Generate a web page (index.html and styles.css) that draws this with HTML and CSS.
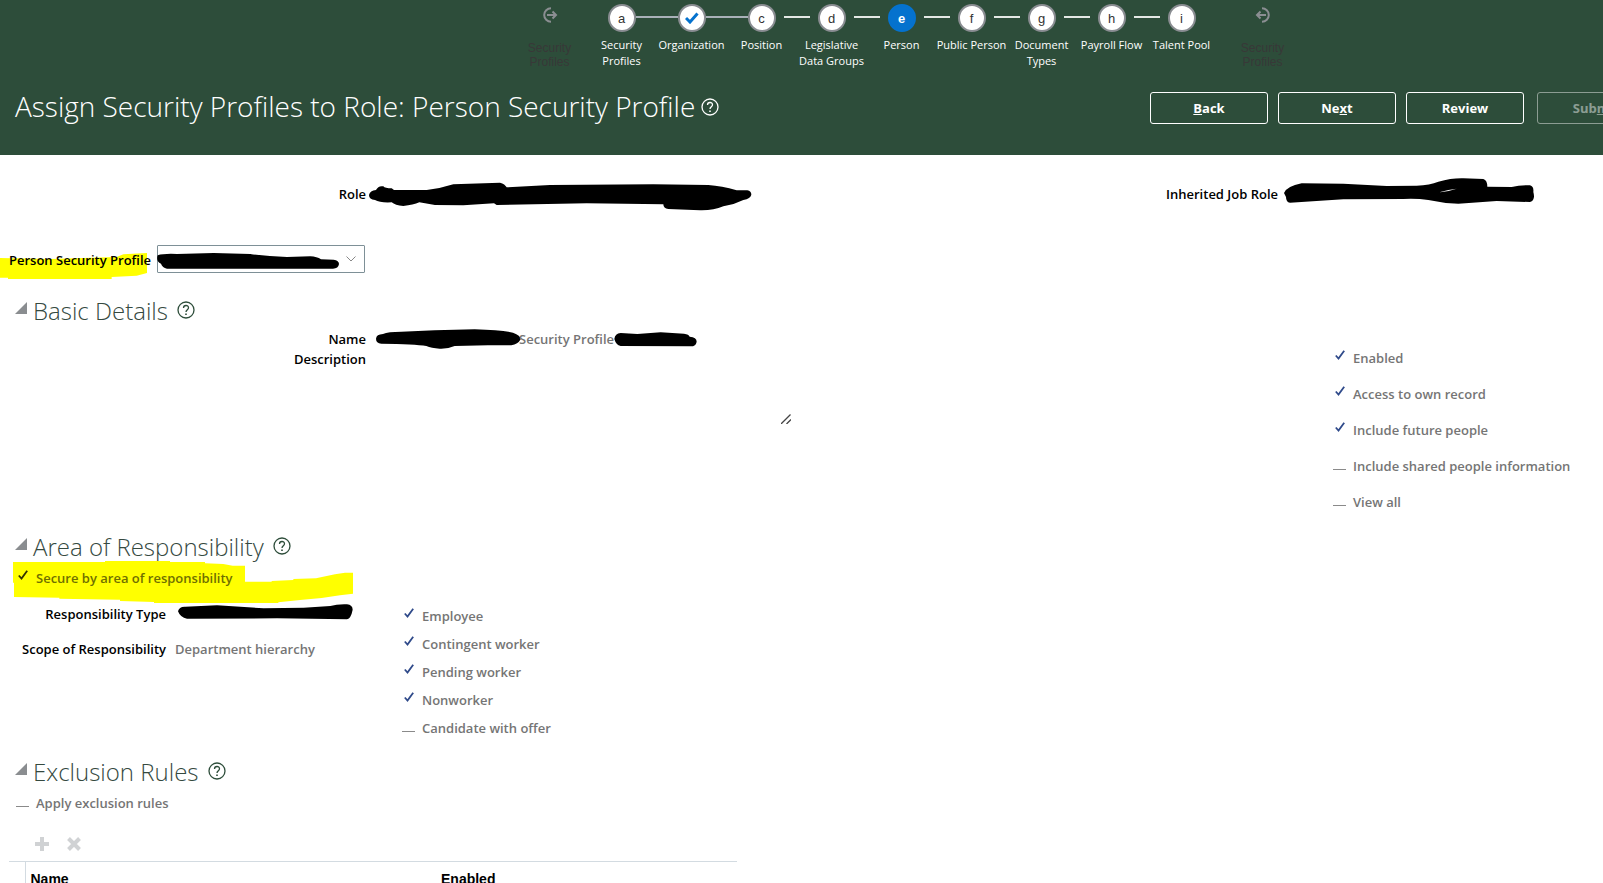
FILE: index.html
```html
<!doctype html>
<html lang="en">
  <head>
    <meta charset="utf-8">
    <title>Assign Security Profiles to Role</title>
    <link rel="stylesheet" href="styles.css">
  </head>
  <body>
    <header class="header">
      <nav class="train">
        <a class="train-end" href="#">
          <svg width="16" height="16" viewBox="0 0 16 16" fill="none" stroke="#8b8e92" stroke-width="2"><path d="M9 1.2A6.8 6.8 0 1 0 9 14.8"/><path d="M5 8h9M10.5 4.5 14 8l-3.500 3.500"/></svg>
          <span>Security<br>Profiles</span>
        </a>
        <ol class="steps">
          <li class="step linked"><a href="#"><b>a</b><span>Security<br>Profiles</span></a></li>
          <li class="step linked"><a href="#"><b><svg width="14" height="12" viewBox="0 0 14 12" fill="none" stroke="#0572ce" stroke-width="3"><path d="M1 6l4 4 7.500-8.500"/></svg></b><span>Organization</span></a></li>
          <li class="step"><a href="#"><b>c</b><span>Position</span></a></li>
          <li class="step"><a href="#"><b>d</b><span>Legislative<br>Data Groups</span></a></li>
          <li class="step current"><a href="#"><b>e</b><span>Person</span></a></li>
          <li class="step"><a href="#"><b>f</b><span>Public Person</span></a></li>
          <li class="step"><a href="#"><b>g</b><span>Document<br>Types</span></a></li>
          <li class="step"><a href="#"><b>h</b><span>Payroll Flow</span></a></li>
          <li class="step"><a href="#"><b>i</b><span>Talent Pool</span></a></li>
        </ol>
        <a class="train-end" href="#">
          <svg width="16" height="16" viewBox="0 0 16 16" fill="none" stroke="#8b8e92" stroke-width="2"><path d="M7 1.200A6.800 6.800 0 1 1 7 14.800"/><path d="M11 8H2M5.500 4.500 2 8l3.500 3.500"/></svg>
          <span>Security<br>Profiles</span>
        </a>
      </nav>

      <div class="title-row">
        <h1>Assign Security Profiles to Role: Person Security Profile</h1>
        <a class="help" href="#" aria-label="Help"><svg width="18" height="18" viewBox="0 0 18 18" fill="none" stroke="currentColor" stroke-width="1.300"><circle cx="9" cy="9" r="8"/><path d="M6.500 7c0-3.300 5-3.300 5-.3C11.500 8.700 9 8.600 9 11"/><path d="M9 12.500v1.500" stroke-width="1.600"/></svg></a>
        <div class="actions">
          <button type="button"><u>B</u>ack</button>
          <button type="button">Ne<u>x</u>t</button>
          <button type="button">Review</button>
          <button type="button" class="submit" disabled>Sub<u>m</u>it</button>
        </div>
      </div>
    </header>

    <main>
      <dl class="role-row">
        <dt>Role</dt>
        <dd>
          <svg width="383" height="29" viewBox="147 66 1149 87"><path d="M147 105Q150 92 168 90Q175 76 190 79Q195 85 215 85L222 90L320 90Q360 86 400 73L540 68Q555 72 560 82L690 75L1000 73L1165 75Q1205 78 1250 91L1282 91Q1294 93 1294 104Q1292 115 1270 120Q1240 135 1210 139Q1180 152 1140 151L1045 147Q1030 145 1030 133L800 130L530 135L522 130L430 136L345 135L298 127Q280 135 250 138Q225 136 215 127Q180 129 165 120Q147 118 147 105Z"/></svg>
        </dd>
        <dt>Inherited Job Role</dt>
        <dd>
          <svg width="251" height="26" viewBox="462 323 753 78"><path d="M462 368Q470 348 515 339L640 340L770 347L860 346Q900 344 925 334Q965 323 1000 324L1060 326Q1072 330 1072 349L1145 350Q1170 344 1200 345Q1212 348 1210 365Q1217 390 1200 395L1100 392L985 400Q940 399 895 389Q860 384 820 386L640 387L480 397Q468 396 468 380Z"/><path d="M931 365Q955 358 980 355Q960 362 931 366Z" fill="#fff"/></svg>
        </dd>
      </dl>

      <div class="profile-row">
        <svg class="marker" width="148" height="27" viewBox="0 0 444 81"><path fill="#ff0" d="M0 15L150 18L350 12L370 4L441 0V60L410 68L335 72V78H24V74H0Z"/></svg>
        <label for="profile">Person Security Profile</label>
        <div class="select-wrap">
          <select id="profile"><option></option></select>
          <svg class="scribble" width="182" height="16" viewBox="470 68 546 48"><path d="M472 75Q490 69 530 71L640 68L750 71Q800 78 860 80L930 78Q950 79 962 87L1000 88Q1016 90 1016 101Q1014 115 998 115L500 115Q486 112 482 100Q466 92 472 75Z"/></svg>
        </div>
      </div>

      <section class="basic">
        <h2><button type="button" class="toggle" aria-label="Collapse"></button>Basic Details <a class="help" href="#" aria-label="Help"><svg width="18" height="18" viewBox="0 0 18 18" fill="none" stroke="currentColor" stroke-width="1.300"><circle cx="9" cy="9" r="8"/><path d="M6.500 7c0-3.300 5-3.300 5-.3C11.500 8.700 9 8.600 9 11"/><path d="M9 12.500v1.500" stroke-width="1.600"/></svg></a></h2>
        <div class="basic-body">
          <div class="fields">
            <span class="name">Name</span>
            <div class="value">
              <svg width="145" height="20" viewBox="284 29 435 60"><path d="M284 58Q285 45 305 44Q320 37 360 37L460 33L580 30Q660 32 695 40Q718 48 718 60Q710 75 690 78L620 78L520 80Q500 89 475 88Q450 86 435 80Q400 74 300 73Q284 72 284 58Z"/></svg>
              <span>Security Profile</span>
              <svg width="83" height="15" viewBox="990 39 249 45"><path d="M991 60Q993 43 1010 42L1060 45L1130 40L1200 44Q1215 46 1217 53Q1238 54 1238 68Q1236 82 1220 82L1010 81Q996 78 991 60Z"/></svg>
            </div>
            <label for="description">Description</label>
            <div class="area">
              <textarea id="description" readonly></textarea>
              <svg class="grip" width="10" height="10" viewBox="0 0 10 10" stroke="#444" stroke-width="1.300"><path d="M0 10 9.500.5M5.500 10 10 5.500"/></svg>
            </div>
          </div>
          <div class="checks wide">
            <label><input type="checkbox" checked disabled>Enabled</label>
            <label><input type="checkbox" checked disabled>Access to own record</label>
            <label><input type="checkbox" checked disabled>Include future people</label>
            <label><input type="checkbox" disabled>Include shared people information</label>
            <label><input type="checkbox" disabled>View all</label>
          </div>
        </div>
      </section>

      <section class="responsibility">
        <h2><button type="button" class="toggle" aria-label="Collapse"></button>Area of Responsibility <a class="help" href="#" aria-label="Help"><svg width="18" height="18" viewBox="0 0 18 18" fill="none" stroke="currentColor" stroke-width="1.300"><circle cx="9" cy="9" r="8"/><path d="M6.500 7c0-3.300 5-3.300 5-.3C11.500 8.700 9 8.600 9 11"/><path d="M9 12.500v1.500" stroke-width="1.600"/></svg></a></h2>
        <div class="secure checks">
          <svg class="marker" width="341" height="42" viewBox="39 123 1023 126"><path fill="#ff0" d="M39 126H315V123H510V126H615V130L670 132L698 137H735V185H815V183L880 180V177L948 175L1005 163L1035 158H1059V221L1020 226L965 234L900 240L835 247V249H462V246L360 243V239L178 236V233L42 231V188H39Z"/></svg>
          <label><input type="checkbox" class="dark" checked disabled>Secure by area of responsibility</label>
        </div>
        <div class="resp-body">
          <dl class="resp-fields">
            <dt>Responsibility Type</dt>
            <dd><svg width="175" height="16" viewBox="533 253 525 48"><path d="M533 275Q536 260 555 261L650 257L790 266L910 264L990 259Q1010 253 1040 254Q1057 256 1057 270Q1052 296 1040 299L830 296L560 297Q540 294 533 275Z"/></svg></dd>
            <dt>Scope of Responsibility</dt>
            <dd>Department hierarchy</dd>
          </dl>
          <div class="checks workers">
            <label><input type="checkbox" checked disabled>Employee</label>
            <label><input type="checkbox" checked disabled>Contingent worker</label>
            <label><input type="checkbox" checked disabled>Pending worker</label>
            <label><input type="checkbox" checked disabled>Nonworker</label>
            <label><input type="checkbox" disabled>Candidate with offer</label>
          </div>
        </div>
      </section>

      <section class="exclusion">
        <h2><button type="button" class="toggle" aria-label="Collapse"></button>Exclusion Rules <a class="help" href="#" aria-label="Help"><svg width="18" height="18" viewBox="0 0 18 18" fill="none" stroke="currentColor" stroke-width="1.300"><circle cx="9" cy="9" r="8"/><path d="M6.500 7c0-3.300 5-3.300 5-.3C11.500 8.700 9 8.600 9 11"/><path d="M9 12.500v1.500" stroke-width="1.600"/></svg></a></h2>
        <div class="secure checks">
          <label><input type="checkbox" disabled>Apply exclusion rules</label>
        </div>
        <div class="toolbar">
          <button type="button" aria-label="Add" disabled><svg width="14" height="14" viewBox="0 0 14 14" stroke="#d0d2d4" stroke-width="4"><path d="M7 0v14M0 7h14"/></svg></button>
          <button type="button" aria-label="Delete" disabled><svg width="14" height="14" viewBox="0 0 14 14" stroke="#d0d2d4" stroke-width="4"><path d="M1.500 1.500l11 11M12.500 1.500l-11 11"/></svg></button>
        </div>
        <table>
          <thead>
            <tr><td class="row-head"></td><th class="col-name">Name</th><th>Enabled</th></tr>
          </thead>
        </table>
      </section>
    </main>
  </body>
</html>
```
FILE: styles.css
```css
* {
  box-sizing: border-box;
}
body {
  margin: 0;
  height: 100vh;
  overflow: hidden;
  background: #fff;
  color: #000;
  font-family: "Open Sans", "Noto Sans", sans-serif;
  font-size: 13px;
  font-weight: 600;
  line-height: 20px;
}
a {
  color: inherit;
  text-decoration: none;
}
svg {
  display: block;
  flex: none;
}
button {
  font: inherit;
}
dl, dd, ol {
  margin: 0;
  padding: 0;
}

/* header */
.header {
  height: 155px;
  background: #2d4d3a;
  color: #fff;
}
.train {
  display: flex;
  justify-content: center;
  padding: 4px 0 0 209px;
  height: 84px;
}
.train-end {
  width: 60px;
  padding-top: 3px;
  font: 12px/14px "Liberation Sans", sans-serif;
  color: #383838;
  text-align: center;
}
.train-end svg {
  margin: 0 auto 18px;
}
.steps {
  display: flex;
  list-style: none;
  padding: 0 16px 0 7px;
}
.step {
  position: relative;
  width: 70px;
  font-size: 11px;
  font-weight: 400;
  line-height: 16px;
  text-align: center;
  white-space: nowrap;
}
.step a {
  display: flex;
  flex-direction: column;
  align-items: center;
  gap: 5px;
}
.step b {
  display: flex;
  align-items: center;
  justify-content: center;
  width: 28px;
  height: 28px;
  border: 2px solid #8a8d92;
  border-radius: 50%;
  background: #fff;
  color: #333;
  font: 13px "Liberation Sans", sans-serif;
}
.step.current b {
  background: #0572ce;
  border-color: #0572ce;
  color: #fff;
  font-weight: bold;
}
.step:not(:last-child)::after {
  content: "";
  position: absolute;
  top: 12px;
  left: calc(50% + 22px);
  width: 26px;
  height: 2px;
  background: #e4e8e4;
}
.step.linked::after {
  left: calc(50% + 14px);
  width: 42px;
  background: #a9b1b8;
}
.title-row {
  display: flex;
  align-items: center;
  padding: 0 0 0 15px;
  margin-right: -52px;
  height: 48px;
}
h1 {
  margin: 0;
  padding-bottom: 4px;
  font-size: 28px;
  font-weight: 300;
  line-height: 36px;
}
.title-row .help {
  margin-left: 6px;
  padding-bottom: 2px;
}
.actions {
  display: flex;
  gap: 10px;
  margin-left: auto;
}
.actions button {
  width: 118px;
  height: 32px;
  padding: 0;
  border: 1px solid #fff;
  border-radius: 3px;
  background: none;
  color: #fff;
  font-weight: 700;
}
.actions .submit {
  margin-left: 3px;
  opacity: 0.45;
}

/* role */
.role-row {
  display: grid;
  grid-template-columns: 366px 1fr auto 325px;
  align-items: center;
  height: 78px;
}
.role-row dt {
  text-align: right;
}
.role-row dd {
  padding: 4px 0 0 3px;
}
.role-row dd:last-child {
  padding: 0 0 6px 6px;
}

.profile-row {
  position: relative;
  display: flex;
  align-items: center;
  gap: 6px;
  margin-top: 12px;
  padding-left: 9px;
}
.profile-row label {
  position: relative;
  padding-top: 2px;
}
.profile-row .marker {
  position: absolute;
  left: 0;
  top: 8px;
}
.select-wrap {
  position: relative;
}
.select-wrap .scribble {
  position: absolute;
  left: 0;
  top: 8px;
}
select {
  display: block;
  width: 208px;
  height: 28px;
  border: 1px solid #7e9097;
  border-radius: 1px;
  appearance: none;
  background: #fff url("data:image/svg+xml,%3Csvg xmlns='http://www.w3.org/2000/svg' width='10' height='6' fill='none' stroke='%23888'%3E%3Cpath d='M.5.5 5 5 9.500.5'/%3E%3C/svg%3E") no-repeat right 8px center;
}

/* sections */
h2 {
  display: flex;
  align-items: center;
  margin: 0;
  padding-left: 15px;
  font-size: 24px;
  font-weight: 300;
  line-height: 32px;
  color: #35493f;
}
h2 .help {
  margin-left: 9px;
  padding-bottom: 2px;
  color: #2d4d3a;
}
.toggle {
  width: 12px;
  height: 12px;
  margin: 0 6px 6px 0;
  padding: 0;
  border: 0;
  background: #8a8d90;
  clip-path: polygon(100% 0, 100% 100%, 0 100%);
}
.basic {
  margin-top: 22px;
}
.basic-body {
  display: grid;
  grid-template-columns: 1fr 270px;
}
.fields {
  display: grid;
  grid-template-columns: 366px 420px;
  column-gap: 8px;
  align-content: start;
  margin-top: 2px;
}
.name, .fields label {
  text-align: right;
}
.value {
  display: flex;
  align-items: center;
  padding-left: 2px;
  color: #757575;
}
.value span {
  margin-left: -2px;
}
.area {
  position: relative;
}
textarea {
  display: block;
  width: 100%;
  height: 76px;
  border: 0;
  resize: none;
  outline: none;
}
.grip {
  position: absolute;
  right: 3px;
  bottom: 1px;
}
.checks {
  display: flex;
  flex-direction: column;
  gap: 8px;
  color: #757575;
}
.checks.wide {
  gap: 16px;
  padding-top: 21px;
}
.checks label {
  position: relative;
  display: flex;
  align-items: flex-start;
  gap: 6px;
  white-space: nowrap;
}
.checks input {
  appearance: none;
  flex: none;
  width: 14px;
  height: 16px;
  margin: 0;
  background: linear-gradient(#8a8a8a, #8a8a8a) no-repeat 0 13px / 13px 1px;
}
.checks input:checked {
  background: url("data:image/svg+xml,%3Csvg xmlns='http://www.w3.org/2000/svg' width='10' height='10' fill='none' stroke='%232f4a8a' stroke-width='1.800'%3E%3Cpath d='M.8 5.500 3.500 8.500 9.200.8'/%3E%3C/svg%3E") no-repeat 2px 2px;
}
.checks input.dark:checked {
  background-image: url("data:image/svg+xml,%3Csvg xmlns='http://www.w3.org/2000/svg' width='10' height='10' fill='none' stroke='%23333300' stroke-width='1.800'%3E%3Cpath d='M.8 5.500 3.500 8.500 9.200.8'/%3E%3C/svg%3E");
}
.responsibility {
  margin-top: 19px;
}
.secure {
  position: relative;
  padding: 5px 0 0 16px;
}
.secure .marker {
  position: absolute;
  left: 13px;
  top: -2px;
}
.responsibility .secure label {
  color: #6f6f00;
}
.resp-body {
  display: grid;
  grid-template-columns: 402px 1fr;
  padding-top: 16px;
}
.workers {
  padding-top: 2px;
}
.resp-fields {
  display: grid;
  grid-template-columns: 166px 1fr;
  column-gap: 9px;
  row-gap: 15px;
  align-content: start;
}
.resp-fields dt {
  text-align: right;
}
.resp-fields dd {
  color: #757575;
}
.resp-fields svg {
  margin: 0 3px;
}
.exclusion {
  margin-top: 18px;
}
.toolbar {
  display: flex;
  gap: 18px;
  padding: 24px 35px 10px;
}
.toolbar button {
  padding: 0;
  border: 0;
  background: none;
}
table {
  width: 728px;
  margin-left: 9px;
  table-layout: fixed;
  border-collapse: collapse;
  border-top: 1px solid #d3dbe1;
  font-family: "Liberation Sans", sans-serif;
  font-size: 14px;
}
th {
  height: 34px;
  padding: 0 5px;
  text-align: left;
}
.col-name {
  width: 411px;
}
.row-head {
  width: 16px;
  padding: 0;
  border-right: 1px solid #d3dbe1;
}
```
